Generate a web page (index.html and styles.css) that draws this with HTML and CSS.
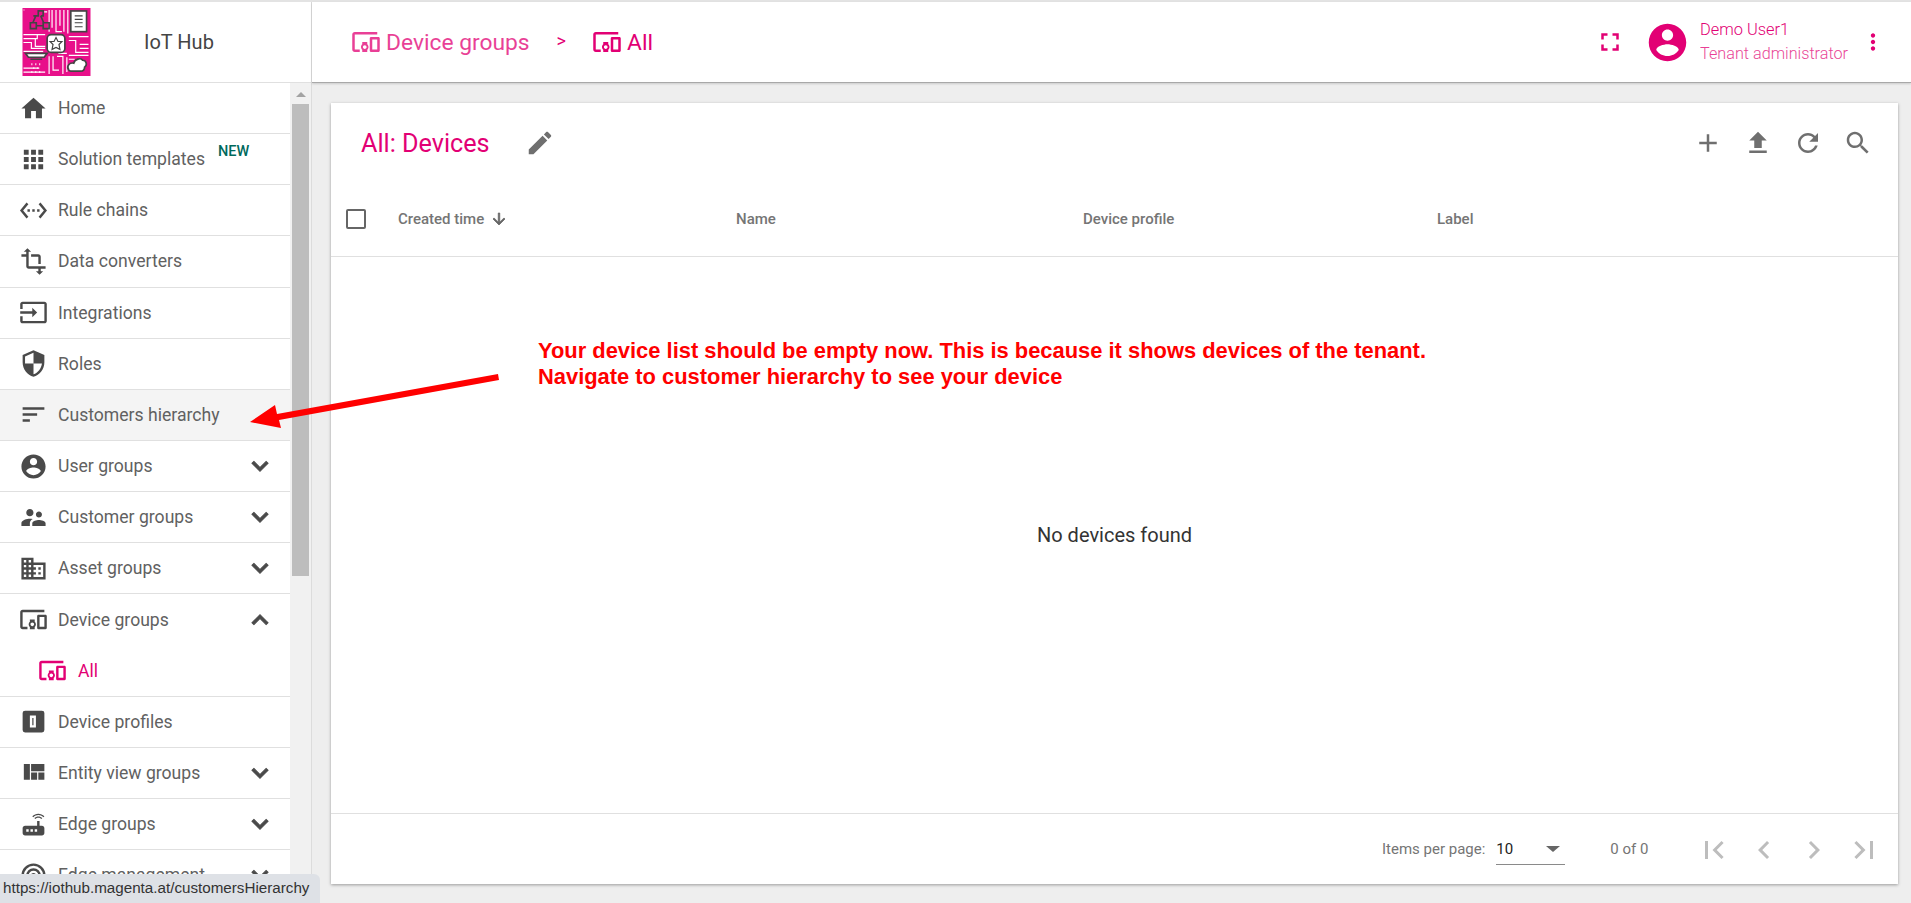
FILE: index.html
```html
<!DOCTYPE html>
<html lang="en">
<head>
    <meta charset="UTF-8">
    <meta name="viewport" content="width=device-width, initial-scale=1.0">
    <title>IoT Hub - Device groups</title>
    <link rel="stylesheet" href="styles.css">
</head>
<body>
    <!-- Icon sprite -->
    <svg class="sprite" width="0" height="0">
        <symbol id="i-home" viewBox="0 0 24 24"><path d="M10 20v-6h4v6h5v-8h3L12 3 2 12h3v8z"/></symbol>
        <symbol id="i-apps" viewBox="0 0 24 24"><path d="M4 8h4V4H4v4zm6 12h4v-4h-4v4zm-6 0h4v-4H4v4zm0-6h4v-4H4v4zm6 0h4v-4h-4v4zm6-10v4h4V4h-4zm-6 4h4V4h-4v4zm6 6h4v-4h-4v4zm0 6h4v-4h-4v4z"/></symbol>
        <symbol id="i-ethernet" viewBox="0 0 24 24"><path d="M7.77 6.76L6.23 5.48.82 12l5.41 6.52 1.54-1.28L3.42 12l4.35-5.24zM7 13h2v-2H7v2zm10-2h-2v2h2v-2zm-6 2h2v-2h-2v2zm6.77-7.52l-1.54 1.28L20.58 12l-4.35 5.24 1.54 1.28L23.18 12l-5.41-6.52z"/></symbol>
        <symbol id="i-transform" viewBox="0 0 24 24"><path d="M22 18v-2H8V4h2L7 1 4 4h2v2H2v2h4v8c0 1.1.9 2 2 2h8v2h-2l3 3 3-3h-2v-2h4zM10 8h6v6h2V8c0-1.1-.9-2-2-2h-6v2z"/></symbol>
        <symbol id="i-input" viewBox="0 0 24 24"><path d="M21 3.01H3c-1.1 0-2 .9-2 2V9h2V4.99h18v14.03H3V15H1v4.01c0 1.1.9 1.98 2 1.98h18c1.1 0 2-.88 2-1.98v-14c0-1.11-.9-2-2-2zM11 16l4-4-4-4v3H1v2h10v3z"/></symbol>
        <symbol id="i-security" viewBox="0 0 24 24"><path d="M12 1L3 5v6c0 5.55 3.84 10.74 9 12 5.16-1.26 9-6.45 9-12V5l-9-4zm0 10.99h7c-.53 4.12-3.28 7.79-7 8.94V12H5V6.3l7-3.11v8.8z"/></symbol>
        <symbol id="i-sort" viewBox="0 0 24 24"><path d="M3 18h6v-2H3v2zM3 6v2h18V6H3zm0 7h12v-2H3v2z"/></symbol>
        <symbol id="i-account" viewBox="0 0 24 24"><path d="M12 2C6.48 2 2 6.48 2 12s4.48 10 10 10 10-4.48 10-10S17.52 2 12 2zm0 3c1.66 0 3 1.34 3 3s-1.34 3-3 3-3-1.34-3-3 1.34-3 3-3zm0 14.2c-2.5 0-4.71-1.28-6-3.22.03-1.99 4-3.08 6-3.08 1.99 0 5.97 1.09 6 3.08-1.29 1.94-3.5 3.22-6 3.22z"/></symbol>
        <symbol id="i-supervisor" viewBox="0 0 24 24"><path d="M16.5 12c1.38 0 2.49-1.12 2.49-2.5S17.88 7 16.5 7C15.12 7 14 8.12 14 9.5s1.12 2.5 2.5 2.5zM9 11c1.66 0 2.99-1.34 2.99-3S10.66 5 9 5C7.34 5 6 6.34 6 8s1.34 3 3 3zm7.5 3c-1.83 0-5.5.92-5.5 2.75V19h11v-2.25c0-1.83-3.67-2.75-5.5-2.75zM9 13c-2.33 0-7 1.17-7 3.5V19h7v-2.25c0-.85.33-2.34 2.37-3.47C10.5 13.1 9.66 13 9 13z"/></symbol>
        <symbol id="i-domain" viewBox="0 0 24 24"><path d="M12 7V3H2v18h20V7H12zM6 19H4v-2h2v2zm0-4H4v-2h2v2zm0-4H4V9h2v2zm0-4H4V5h2v2zm4 12H8v-2h2v2zm0-4H8v-2h2v2zm0-4H8V9h2v2zm0-4H8V5h2v2zm10 12h-8v-2h2v-2h-2v-2h2v-2h-2V9h8v10zm-2-8h-2v2h2v-2zm0 4h-2v2h2v-2z"/></symbol>
        <symbol id="i-devices" viewBox="0 0 24 24"><path d="M3 6h18V4H3c-1.100 0-2 .9-2 2v12c0 1.100.9 2 2 2h4v-2H3V6zm10 6H9v1.780c-.61.55-1 1.330-1 2.220s.39 1.670 1 2.220V20h4v-1.780c.61-.55 1-1.340 1-2.220s-.39-1.670-1-2.220V12zm-2 5.500c-.83 0-1.500-.67-1.500-1.500s.67-1.500 1.500-1.500 1.500.67 1.500 1.500-.67 1.500-1.500 1.500zM22 8h-6c-.5 0-1 .5-1 1v10c0 .5.5 1 1 1h6c.5 0 1-.5 1-1V9c0-.5-.5-1-1-1zm-1 10h-4v-8h4v8z"/></symbol>
        <symbol id="i-profile" viewBox="0 0 24 24"><path fill-rule="evenodd" d="M5 3h14a2 2 0 0 1 2 2v14a2 2 0 0 1-2 2H5a2 2 0 0 1-2-2V5a2 2 0 0 1 2-2zm4 4v10h5V7H9zm2 2h1v6h-1V9z"/></symbol>
        <symbol id="i-quilt" viewBox="0 0 24 24"><path d="M10 18h5v-6h-5v6zm-6 0h5V5H4v13zm12 0h5v-6h-5v6zM10 5v6h11V5H10z"/></symbol>
        <symbol id="i-router" viewBox="0 0 24 24"><path d="M20.2 5.9l.8-.8C19.6 3.7 17.8 3 16 3s-3.6.7-5 2.1l.8.8C13 4.8 14.5 4.2 16 4.2s3 .6 4.2 1.7zm-.9.8c-.9-.9-2.1-1.4-3.3-1.4s-2.4.5-3.3 1.4l.8.8c.7-.7 1.6-1 2.5-1 .9 0 1.8.3 2.5 1l.8-.8zM19 13h-2V9h-2v4H5c-1.1 0-2 .9-2 2v4c0 1.1.9 2 2 2h14c1.1 0 2-.9 2-2v-4c0-1.1-.9-2-2-2zM8 18H6v-2h2v2zm3.5 0h-2v-2h2v2zm3.5 0h-2v-2h2v2z"/></symbol>
        <symbol id="i-track" viewBox="0 0 24 24"><path fill-rule="evenodd" d="M12 2a10 10 0 1 0 0 20 10 10 0 0 0 0-20zm0 2a8 8 0 1 1 0 16 8 8 0 0 1 0-16zm0 2a6 6 0 1 0 0 12 6 6 0 0 0 0-12zm0 2a4 4 0 1 1 0 8 4 4 0 0 1 0-8zm0 2a2 2 0 1 0 0 4 2 2 0 0 0 0-4z"/></symbol>
        <symbol id="i-down" viewBox="0 0 24 24"><path d="M7.41 8.59L12 13.17l4.59-4.58L18 10l-6 6-6-6 1.41-1.41z"/></symbol>
        <symbol id="i-up" viewBox="0 0 24 24"><path d="M7.41 15.41L12 10.83l4.59 4.58L18 14l-6-6-6 6z"/></symbol>
        <symbol id="i-fullscreen" viewBox="0 0 24 24"><path d="M7 14H5v5h5v-2H7v-3zm-2-4h2V7h3V5H5v5zm12 7h-3v2h5v-5h-2v3zM14 5v2h3v3h2V5h-5z"/></symbol>
        <symbol id="i-more" viewBox="0 0 24 24"><path d="M12 8c1.1 0 2-.9 2-2s-.9-2-2-2-2 .9-2 2 .9 2 2 2zm0 2c-1.1 0-2 .9-2 2s.9 2 2 2 2-.9 2-2-.9-2-2-2zm0 6c-1.1 0-2 .9-2 2s.9 2 2 2 2-.9 2-2-.9-2-2-2z"/></symbol>
        <symbol id="i-edit" viewBox="0 0 24 24"><path d="M3 17.25V21h3.75L17.81 9.94l-3.75-3.75L3 17.25zM20.71 7.04c.39-.39.39-1.02 0-1.41l-2.34-2.34c-.39-.39-1.02-.39-1.41 0l-1.83 1.83 3.75 3.75 1.83-1.83z"/></symbol>
        <symbol id="i-add" viewBox="0 0 24 24"><path d="M19 13h-6v6h-2v-6H5v-2h6V5h2v6h6v2z"/></symbol>
        <symbol id="i-upload" viewBox="0 0 24 24"><path d="M9 16h6v-6h4l-7-7-7 7h4zm-4 2h14v2H5z"/></symbol>
        <symbol id="i-refresh" viewBox="0 0 24 24"><path d="M17.65 6.35C16.2 4.9 14.21 4 12 4c-4.42 0-7.99 3.58-7.99 8s3.57 8 7.99 8c3.73 0 6.84-2.55 7.73-6h-2.08c-.82 2.33-3.04 4-5.65 4-3.31 0-6-2.69-6-6s2.69-6 6-6c1.66 0 3.14.69 4.22 1.78L13 11h7V4l-2.35 2.35z"/></symbol>
        <symbol id="i-search" viewBox="0 0 24 24"><path d="M15.5 14h-.79l-.28-.27C15.41 12.59 16 11.11 16 9.5 16 5.91 13.09 3 9.5 3S3 5.91 3 9.5 5.91 16 9.5 16c1.61 0 3.09-.59 4.23-1.57l.27.28v.79l5 4.99L20.49 19l-4.99-5zm-6 0C7.01 14 5 11.99 5 9.5S7.01 5 9.5 5 14 7.01 14 9.5 11.99 14 9.5 14z"/></symbol>
        <symbol id="i-arrow-down" viewBox="0 0 24 24"><path d="M20 12l-1.41-1.41L13 16.17V4h-2v12.17l-5.58-5.59L4 12l8 8 8-8z"/></symbol>
        <symbol id="i-first" viewBox="0 0 24 24"><path d="M18.41 16.59L13.82 12l4.59-4.59L17 6l-6 6 6 6zM6 6h2v12H6z"/></symbol>
        <symbol id="i-prev" viewBox="0 0 24 24"><path d="M15.41 7.41L14 6l-6 6 6 6 1.41-1.41L10.83 12z"/></symbol>
        <symbol id="i-next" viewBox="0 0 24 24"><path d="M10 6L8.59 7.41 13.17 12l-4.58 4.59L10 18l6-6z"/></symbol>
        <symbol id="i-last" viewBox="0 0 24 24"><path d="M5.59 7.41L10.18 12l-4.59 4.59L7 18l6-6-6-6zM16 6h2v12h-2z"/></symbol>
    </svg>

    <div class="app">
        <!-- Sidebar -->
        <aside class="sidebar">
            <div class="brand">
                <svg class="logo" viewBox="0 0 69 69">
                    <rect width="69" height="69" fill="#e8108a"/>
                    <g fill="none" stroke="#fff" stroke-width="1.200">
                        <path d="M27 2v22M30 2v18M34 2v22h6M38 2v16M42 2v22M46 2v24M1 27h22M1 31h14v-4M1 35h8v6h14M1 44h20M13 31v8h10M47 29h20M47 33h7v12h13M58 37h9M58 41h9M47 48h20M47 52h6M27 49v18M31 49v14h6M35 49h6v18M45 46h-8v-3M45 50v15M1 65h22M1 61h16M1 2h1M25 4h-3"/>
                    </g>
                    <g fill="none" stroke="#444" stroke-width="1.700">
                        <path d="M11 8h5V3h5v5h-2.500M8 15h6v6H8zM21 15h6v6h-6zM14 18h7M13.500 8l-3 7M18.500 8l3 7"/>
                        <rect x="49" y="3" width="16" height="21" fill="#fff"/>
                        <path d="M53 8h8M53 11.500h8M53 15h8M53 19h8" stroke-width="1.200"/>
                        <rect x="25" y="27" width="18" height="18" rx="4" fill="#fff"/>
                        <path d="M34 30l2 4h4l-3 3 1 5-4-2-4 2 1-5-3-3h4z" stroke-width="1.200"/>
                        <path d="M3 46h22l-3 4H6zM8 52h12" fill="#fff"/>
                        <path d="M47 63c-3-4 1-8 5-7 1-4 7-6 9-3 4 0 5 5 2 7 0 3-2 4-4 4H49c-1 0-2 0-2-1z" fill="#fff"/>
                    </g>
                    <path d="M9 57h1M13 57h1M17 57h1M11 61h1M15 61h1M9 65h1M13 65h1M17 65h1" stroke="#fff" stroke-width="2"/>
                </svg>
                <span class="brand-name">IoT Hub</span>
            </div>
            <div class="nav-wrap">
                <nav class="menu">
                    <a class="menu-item"><svg class="ico"><use href="#i-home"/></svg><span>Home</span></a>
                    <a class="menu-item"><svg class="ico"><use href="#i-apps"/></svg><span>Solution templates</span><b class="new">NEW</b></a>
                    <a class="menu-item"><svg class="ico"><use href="#i-ethernet"/></svg><span>Rule chains</span></a>
                    <a class="menu-item"><svg class="ico"><use href="#i-transform"/></svg><span>Data converters</span></a>
                    <a class="menu-item"><svg class="ico"><use href="#i-input"/></svg><span>Integrations</span></a>
                    <a class="menu-item"><svg class="ico"><use href="#i-security"/></svg><span>Roles</span></a>
                    <a class="menu-item hovered"><svg class="ico"><use href="#i-sort"/></svg><span>Customers hierarchy</span></a>
                    <a class="menu-item"><svg class="ico"><use href="#i-account"/></svg><span>User groups</span><svg class="chev"><use href="#i-down"/></svg></a>
                    <a class="menu-item"><svg class="ico"><use href="#i-supervisor"/></svg><span>Customer groups</span><svg class="chev"><use href="#i-down"/></svg></a>
                    <a class="menu-item"><svg class="ico"><use href="#i-domain"/></svg><span>Asset groups</span><svg class="chev"><use href="#i-down"/></svg></a>
                    <a class="menu-item open"><svg class="ico"><use href="#i-devices"/></svg><span>Device groups</span><svg class="chev"><use href="#i-up"/></svg></a>
                    <a class="menu-item sub"><svg class="ico"><use href="#i-devices"/></svg><span>All</span></a>
                    <a class="menu-item"><svg class="ico"><use href="#i-profile"/></svg><span>Device profiles</span></a>
                    <a class="menu-item"><svg class="ico"><use href="#i-quilt"/></svg><span>Entity view groups</span><svg class="chev"><use href="#i-down"/></svg></a>
                    <a class="menu-item"><svg class="ico"><use href="#i-router"/></svg><span>Edge groups</span><svg class="chev"><use href="#i-down"/></svg></a>
                    <a class="menu-item"><svg class="ico"><use href="#i-track"/></svg><span>Edge management</span><svg class="chev"><use href="#i-down"/></svg></a>
                </nav>
                <div class="scrollbar">
                    <div class="scroll-up"></div>
                    <div class="scroll-thumb"></div>
                </div>
            </div>
        </aside>

        <div class="main">
            <!-- Top bar -->
            <header class="topbar">
                <div class="crumb faded"><svg class="crumb-ico"><use href="#i-devices"/></svg>Device groups</div>
                <div class="crumb-sep">&gt;</div>
                <div class="crumb"><svg class="crumb-ico"><use href="#i-devices"/></svg>All</div>
                <div class="spacer"></div>
                <svg class="top-ico"><use href="#i-fullscreen"/></svg>
                <svg class="avatar"><use href="#i-account"/></svg>
                <div class="user">
                    <div class="user-name">Demo User1</div>
                    <div class="user-role">Tenant administrator</div>
                </div>
                <svg class="top-ico more"><use href="#i-more"/></svg>
            </header>

            <!-- Devices card -->
            <section class="card">
                <div class="card-head">
                    <h2 class="card-title">All: Devices</h2>
                    <svg class="act edit"><use href="#i-edit"/></svg>
                    <div class="spacer"></div>
                    <svg class="act"><use href="#i-add"/></svg>
                    <svg class="act"><use href="#i-upload"/></svg>
                    <svg class="act"><use href="#i-refresh"/></svg>
                    <svg class="act"><use href="#i-search"/></svg>
                </div>
                <div class="table-head">
                    <div class="checkbox"></div>
                    <div class="col col-time">Created time<svg class="sort-ico"><use href="#i-arrow-down"/></svg></div>
                    <div class="col col-name">Name</div>
                    <div class="col col-profile">Device profile</div>
                    <div class="col">Label</div>
                </div>
                <div class="table-body">No devices found</div>
                <div class="paginator">
                    <span class="page-label">Items per page:</span>
                    <div class="page-select"><span>10</span><i class="caret"></i></div>
                    <span class="page-range">0 of 0</span>
                    <svg class="page-btn"><use href="#i-first"/></svg>
                    <svg class="page-btn"><use href="#i-prev"/></svg>
                    <svg class="page-btn"><use href="#i-next"/></svg>
                    <svg class="page-btn"><use href="#i-last"/></svg>
                </div>
            </section>
        </div>
    </div>

    <!-- Annotation drawn over the screenshot -->
    <svg class="note-arrow" width="1911" height="903">
        <path d="M498 374L277 414L275 405L250 422L281 428L279 420L499 380z" fill="#ff0000"/>
    </svg>
    <p class="note">Your device list should be empty now. This is because it shows devices of the tenant.<br>Navigate to customer hierarchy to see your device</p>

    <!-- Browser status bubble -->
    <div class="status">https://iothub.magenta.at/customersHierarchy</div>
</body>
</html>
```

FILE: styles.css
```css
* {
    box-sizing: border-box;
}
html, body {
    margin: 0;
    padding: 0;
    height: 100%;
    overflow: hidden;
}
body {
    font-family: Roboto, "Noto Sans", sans-serif;
    background-color: #eeeeee;
    color: #555;
}
.sprite {
    position: absolute;
}
svg {
    fill: currentColor;
    flex: none;
}
.spacer {
    flex: 1;
}
.app {
    display: flex;
    height: 903px;
    border-top: 2px solid #e3e3e3;
}

/* Sidebar */
.sidebar {
    width: 312px;
    flex: none;
    background-color: #fff;
    border-right: 1px solid #dcdcdc;
    display: flex;
    flex-direction: column;
}
.brand {
    height: 81px;
    flex: none;
    display: flex;
    align-items: center;
    padding-left: 22px;
    border-bottom: 1px solid #e0e0e0;
}
.logo {
    width: 69px;
    height: 68px;
}
.brand-name {
    margin-left: 53px;
    font-size: 20px;
    color: #444;
}
.nav-wrap {
    flex: 1;
    display: flex;
    min-height: 0;
}
.menu {
    width: 290px;
    flex: none;
    overflow: hidden;
}
.menu-item {
    height: 51.15px;
    display: flex;
    align-items: center;
    padding-left: 19px;
    border-bottom: 1px solid #e0e0e0;
    font-size: 17.6px;
    color: #616161;
}
.menu-item.hovered {
    background-color: #f4f4f4;
}
.menu-item.open {
    border-bottom: none;
}
.menu-item.sub {
    padding-left: 38px;
    color: #e20074;
}
.ico {
    width: 29px;
    height: 29px;
    margin-right: 10px;
    color: #4a4a4a;
}
.sub .ico {
    color: #e20074;
    margin-right: 11px;
}
.chev {
    width: 32px;
    height: 32px;
    margin-left: auto;
    margin-right: 14px;
    color: #4a4a4a;
    stroke: currentColor;
    stroke-width: 0.8;
}
.new {
    font-size: 14.5px;
    font-weight: 500;
    color: #00695c;
    margin: -15px 0 0 13px;
}
.scrollbar {
    width: 21px;
    background-color: #f1f1f1;
    padding: 0 2px;
}
.scroll-up {
    width: 0;
    height: 0;
    margin: 9px auto 7px;
    border-left: 5px solid transparent;
    border-right: 5px solid transparent;
    border-bottom: 5px solid #a3a3a3;
}
.scroll-thumb {
    height: 472px;
    background-color: #bdbdbd;
}

/* Top bar */
.main {
    flex: 1;
    min-width: 0;
    display: flex;
    flex-direction: column;
}
.topbar {
    height: 81px;
    flex: none;
    display: flex;
    align-items: center;
    background-color: #fff;
    padding-left: 39px;
    border-bottom: 1px solid #a8a8a8;
    box-shadow: 0 1px 2px rgba(0, 0, 0, 0.15);
    color: #e20074;
}
.crumb {
    display: flex;
    align-items: center;
    font-size: 22.8px;
}
.crumb.faded {
    opacity: 0.75;
}
.crumb-ico {
    width: 30px;
    height: 30px;
    margin-right: 5px;
}
.crumb-sep {
    font-size: 18px;
    margin: -4px 26px 0 27px;
}
.top-ico {
    width: 30px;
    height: 30px;
    color: #e20074;
}
.avatar {
    width: 45px;
    height: 45px;
    margin-left: 20px;
    color: #e20074;
}
.user {
    margin-left: 10px;
    font-weight: 300;
    line-height: 24px;
}
.user-name {
    font-size: 16.4px;
}
.user-role {
    font-size: 16.2px;
    opacity: 0.75;
}
.more {
    width: 26px;
    height: 26px;
    margin: 0 25px 0 12px;
}

/* Card */
.card {
    flex: 1;
    display: flex;
    flex-direction: column;
    margin: 20px 13px 19px 19px;
    background-color: #fff;
    box-shadow: 0 1px 3px rgba(0, 0, 0, 0.35);
}
.card-head {
    height: 80px;
    flex: none;
    display: flex;
    align-items: center;
    padding: 0 25px 0 30px;
    color: #6f6f6f;
}
.card-title {
    margin: 0 35px 0 0;
    font-size: 25.2px;
    font-weight: 400;
    color: #e20074;
}
.act {
    width: 30px;
    height: 30px;
    margin-left: 20px;
}
.act.edit {
    margin-left: 0;
}
.table-head {
    height: 74px;
    flex: none;
    display: flex;
    align-items: center;
    padding: 0 0 2px 15px;
    border-bottom: 1px solid #e0e0e0;
    font-size: 15px;
    font-weight: 500;
    color: #757575;
}
.checkbox {
    width: 20px;
    height: 20px;
    border: 2px solid #666;
    border-radius: 2px;
    margin-right: 32px;
}
.col {
    display: flex;
    align-items: center;
}
.col-time {
    width: 338px;
}
.col-name {
    width: 347px;
}
.col-profile {
    width: 354px;
}
.sort-ico {
    width: 18px;
    height: 18px;
    margin-left: 6px;
    color: #666;
    stroke: currentColor;
    stroke-width: 1;
}
.table-body {
    flex: 1;
    display: flex;
    align-items: center;
    justify-content: center;
    font-size: 20px;
    color: #333;
}
.paginator {
    height: 71px;
    flex: none;
    display: flex;
    align-items: center;
    border-top: 1px solid #e0e0e0;
    padding-left: 1051px;
    font-size: 15px;
    color: #757575;
}
.page-select {
    width: 69px;
    height: 28px;
    margin: 4px 0 0 11px;
    display: flex;
    align-items: center;
    justify-content: space-between;
    border-bottom: 1px solid #8a8a8a;
    color: #222;
    padding-bottom: 4px;
}
.caret {
    margin-right: 5px;
    border-left: 7px solid transparent;
    border-right: 7px solid transparent;
    border-top: 6px solid #666;
}
.page-range {
    margin: 0 48px 0 45px;
}
.page-btn {
    width: 36px;
    height: 36px;
    margin: 2px 14px 0 0;
    color: #bdbdbd;
}

/* Annotation */
.note-arrow {
    position: absolute;
    left: 0;
    top: 0;
    pointer-events: none;
}
.note {
    position: absolute;
    left: 538px;
    top: 338px;
    margin: 0;
    font-family: "Liberation Sans", Arial, sans-serif;
    font-size: 21.9px;
    font-weight: 700;
    line-height: 26px;
    color: #ff0000;
}

/* Status bubble */
.status {
    position: absolute;
    left: 0;
    bottom: 0;
    width: 320px;
    height: 29px;
    padding: 5px 0 0 3px;
    background-color: #dee1e6;
    border-top-right-radius: 6px;
    font-family: "Liberation Sans", Arial, sans-serif;
    font-size: 15.2px;
    color: #333;
    white-space: nowrap;
}
```
